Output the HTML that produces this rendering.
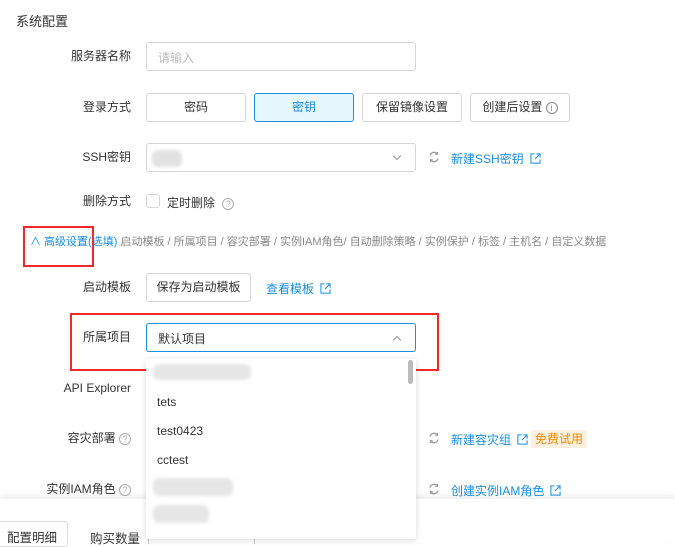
<!DOCTYPE html>
<html><head><meta charset="utf-8"><style>
*{box-sizing:border-box;margin:0;padding:0}
body{width:675px;height:543px;overflow:hidden;background:#fff;position:relative;font-family:"Liberation Sans","Noto Sans CJK SC",sans-serif;font-size:12px;color:#333}
.a{position:absolute;white-space:nowrap}
.lbl{position:absolute;right:544px;line-height:14px;white-space:nowrap;color:#333}
.box{position:absolute;border:1px solid #d5d5d5;border-radius:3px;background:#fff}
.btn{position:absolute;border:1px solid #d5d5d5;border-radius:3px;text-align:center;line-height:26px;background:#fff}
.link{color:#1a8ee0}
.chev{position:absolute;width:6px;height:6px;border-right:1px solid #999;border-bottom:1px solid #999}
.q{display:inline-block;width:12px;height:12px;border:1px solid #aaa;border-radius:50%;font-size:9px;line-height:10px;text-align:center;color:#aaa;vertical-align:middle}
.blur{position:absolute;background:#e6e6e6;border-radius:6px;filter:blur(1.5px)}
svg.ext{vertical-align:-1px;margin-left:6px}
</style></head><body>
<svg width="0" height="0" style="position:absolute"><defs>
<symbol id="e" viewBox="0 0 12 12"><path d="M5 1H1v10h10V7M7 1h4v4M11 1L5.5 6.5" fill="none" stroke="#1a8ee0" stroke-width="1.1"/></symbol>
<symbol id="r" viewBox="0 0 12 12"><path d="M2 4.5A4.2 4.2 0 0 1 9.5 3M10 7.5A4.2 4.2 0 0 1 2.5 9" fill="none" stroke="#999" stroke-width="1.3"/><path d="M9.5 1v2.3H7.3M2.5 11V8.7h2.2" fill="none" stroke="#999" stroke-width="1.1"/></symbol>
</defs></svg>
<div class="a" style="left:16px;top:11px;font-size:13px">系统配置</div>

<div class="lbl" style="top:49px">服务器名称</div>
<div class="box" style="left:146px;top:42px;width:270px;height:29px"></div>
<div class="a" style="left:158px;top:49px;color:#bbb">请输入</div>

<div class="lbl" style="top:100px">登录方式</div>
<div class="btn" style="left:146px;top:93px;width:100px;height:29px">密码</div>
<div class="btn" style="left:254px;top:93px;width:100px;height:29px;background:#e6f6fd;border-color:#1a8ee0;color:#1a8ee0">密钥</div>
<div class="btn" style="left:362px;top:93px;width:100px;height:29px">保留镜像设置</div>
<div class="btn" style="left:470px;top:93px;width:100px;height:29px">创建后设置 <span class="q" style="border-color:#888;color:#888">i</span></div>

<div class="lbl" style="top:150px">SSH密钥</div>
<div class="box" style="left:146px;top:143px;width:270px;height:29px"></div>
<div class="blur" style="left:152px;top:150px;width:30px;height:17px;background:#e2e2e2"></div>
<div class="chev" style="left:394px;top:153px;transform:rotate(45deg)"></div>
<svg class="a" style="left:428px;top:151px" width="12" height="12"><use href="#r"/></svg>
<div class="a link" style="left:451px;top:150px">新建SSH密钥<svg class="ext" width="11" height="11"><use href="#e"/></svg></div>

<div class="lbl" style="top:194px">删除方式</div>
<div class="box" style="left:146px;top:194px;width:14px;height:14px"></div>
<div class="a" style="left:167px;top:194px">定时删除 <span class="q" style="margin-left:4px">?</span></div>

<div class="a" style="left:23px;top:226px;width:71px;height:41px;border:2px solid #f02828"></div>
<div class="a" style="left:30px;top:233px;font-size:11px"><span class="link">∧ 高级设置(选填)</span> <span style="color:#888">启动模板 / 所属项目 / 容灾部署 / 实例IAM角色/ 自动删除策略 / 实例保护 / 标签 / 主机名 / 自定义数据</span></div>

<div class="lbl" style="top:280px">启动模板</div>
<div class="btn" style="left:146px;top:273px;width:105px;height:29px">保存为启动模板</div>
<div class="a link" style="left:266px;top:280px">查看模板<svg class="ext" width="11" height="11"><use href="#e"/></svg></div>

<div class="a" style="left:70px;top:313px;width:369px;height:58px;border:2px solid #f02828"></div>
<div class="lbl" style="top:330px">所属项目</div>
<div class="box" style="left:146px;top:323px;width:270px;height:29px;border-color:#1a8ee0"></div>
<div class="a" style="left:158px;top:330px">默认项目</div>
<div class="chev" style="left:394px;top:337px;transform:rotate(225deg)"></div>

<div class="lbl" style="top:381px">API Explorer</div>
<div class="lbl" style="top:431px">容灾部署 <span class="q">?</span></div>
<svg class="a" style="left:428px;top:432px" width="12" height="12"><use href="#r"/></svg>
<div class="a link" style="left:451px;top:431px">新建容灾组<svg class="ext" width="11" height="11"><use href="#e"/></svg></div>
<div class="a" style="left:531px;top:430px;width:56px;height:18px;background:#fdf0e0;color:#f08a00;text-align:center;line-height:18px;border-radius:2px">免费试用</div>

<div class="lbl" style="top:482px">实例IAM角色 <span class="q">?</span></div>
<svg class="a" style="left:428px;top:483px" width="12" height="12"><use href="#r"/></svg>
<div class="a link" style="left:451px;top:482px">创建实例IAM角色<svg class="ext" width="11" height="11"><use href="#e"/></svg></div>

<div class="a" style="left:0;top:499px;width:675px;height:44px;background:#fff;box-shadow:0 -3px 6px rgba(0,0,0,0.08)"></div>
<div class="a" style="left:-2px;top:521px;width:70px;height:26px;border:1px solid #ddd;border-radius:3px;padding:5px 8px;font-size:12.5px">配置明细</div>
<div class="a" style="left:90px;top:528px;font-size:12.5px">购买数量</div>
<div class="a" style="left:148px;top:528px;width:1px;height:16px;background:#ccc"></div>
<div class="a" style="left:254px;top:528px;width:1px;height:16px;background:#ccc"></div>

<div class="a" style="left:146px;top:359px;width:270px;height:180px;background:#fff;box-shadow:0 1px 6px rgba(0,0,0,0.15)"></div>
<div class="blur" style="left:153px;top:364px;width:98px;height:16px"></div>
<div class="a" style="left:408px;top:360px;width:5px;height:24px;background:#bbb;border-radius:3px"></div>
<div class="a" style="left:157px;top:395px">tets</div>
<div class="a" style="left:157px;top:424px">test0423</div>
<div class="a" style="left:157px;top:453px">cctest</div>
<div class="blur" style="left:153px;top:478px;width:80px;height:18px"></div>
<div class="blur" style="left:153px;top:505px;width:56px;height:18px"></div>
</body></html>
